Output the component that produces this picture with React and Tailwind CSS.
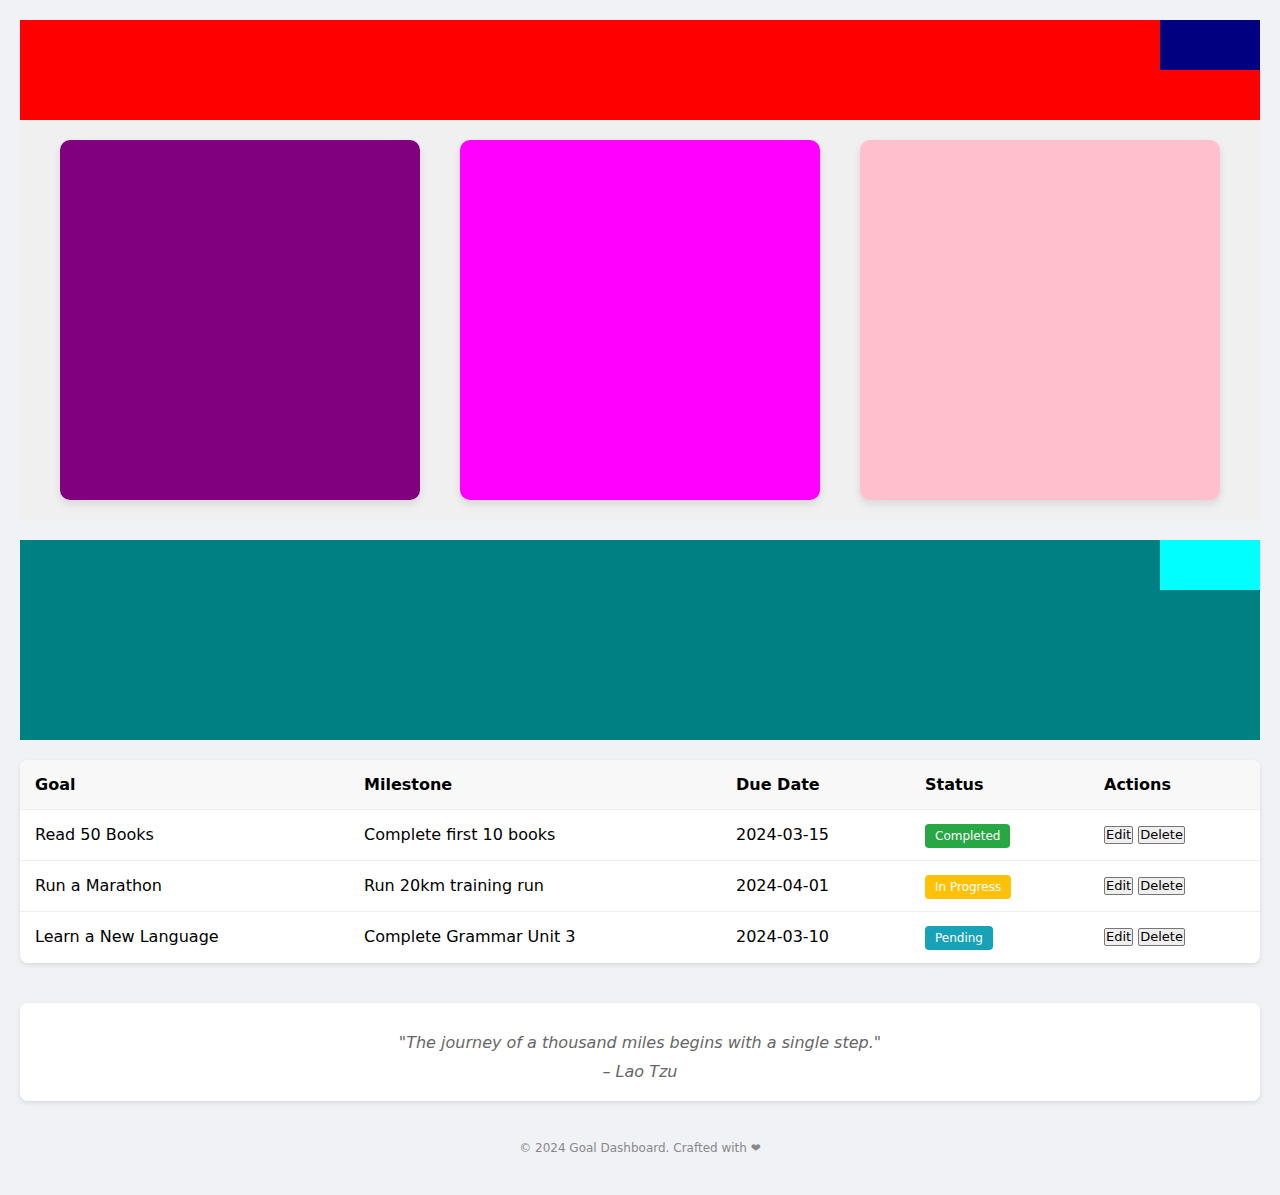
import React from 'react';

const goals = [
  { goal: 'Read 50 Books', milestone: 'Complete first 10 books', due: '2024-03-15', status: 'Completed' },
  { goal: 'Run a Marathon', milestone: 'Run 20km training run', due: '2024-04-01', status: 'In Progress' },
  { goal: 'Learn a New Language', milestone: 'Complete Grammar Unit 3', due: '2024-03-10', status: 'Pending' },
];

const badgeClass = {
  Completed: 'bg-[#28a745]',
  'In Progress': 'bg-[#ffc107]',
  Pending: 'bg-[#17a2b8]',
};

const StatusBadge = ({ status }) => (
  <span className={`${badgeClass[status]} text-white text-[12px] leading-[14px] px-[10px] py-[5px] rounded-[4px]`}>
    {status}
  </span>
);

const SmallButton = ({ children }) => (
  <button className="text-[13px] leading-[16px] px-[1px] border border-[#767676] bg-[#efefef] rounded-[2px] text-black">
    {children}
  </button>
);

const App = () => {
  return (
    <div className="min-h-[1195px] bg-[#f0f2f5] p-[20px] text-black" style={{ fontFamily: '"DejaVu Sans", sans-serif' }}>
      {/* header */}
      <div className="h-[100px] bg-[#ff0000] flex justify-end">
        <div className="w-[100px] h-[50px] bg-[#000080]"></div>
      </div>

      {/* cards */}
      <div className="bg-[#f0f0f0] px-[40px] py-[20px] grid grid-cols-3 gap-[40px]">
        <div className="h-[360px] rounded-[10px] bg-[#800080] shadow-[0_4px_8px_rgba(0,0,0,0.1)]"></div>
        <div className="h-[360px] rounded-[10px] bg-[#ff00ff] shadow-[0_4px_8px_rgba(0,0,0,0.1)]"></div>
        <div className="h-[360px] rounded-[10px] bg-[#ffc0cb] shadow-[0_4px_8px_rgba(0,0,0,0.1)]"></div>
      </div>

      {/* banner */}
      <div className="mt-[20px] h-[200px] bg-[#008080] flex justify-end">
        <div className="w-[100px] h-[50px] bg-[#00ffff]"></div>
      </div>

      {/* goals table */}
      <div className="mt-[20px] bg-white rounded-[8px] overflow-hidden shadow-[0_2px_5px_rgba(0,0,0,0.1)]">
        <table className="w-full table-fixed border-collapse text-[16px] leading-[19px]">
          <colgroup>
            <col className="w-[329px]" />
            <col className="w-[372px]" />
            <col className="w-[189px]" />
            <col className="w-[179px]" />
            <col className="w-[171px]" />
          </colgroup>
          <thead>
            <tr className="bg-[#f8f8f8]">
              {['Goal', 'Milestone', 'Due Date', 'Status', 'Actions'].map((h) => (
                <th key={h} className="text-left font-bold px-[15px] py-[15px] border-b border-[#eeeeee]">
                  {h}
                </th>
              ))}
            </tr>
          </thead>
          <tbody>
            {goals.map((g, i) => {
              const cell = `px-[15px] py-[15px] leading-[20px] border-b ${i < goals.length - 1 ? 'border-[#eeeeee]' : 'border-white'}`;
              return (
                <tr key={g.goal}>
                  <td className={cell}>{g.goal}</td>
                  <td className={cell}>{g.milestone}</td>
                  <td className={cell}>{g.due}</td>
                  <td className={cell}>
                    <StatusBadge status={g.status} />
                  </td>
                  <td className={cell}>
                    <div className="flex items-center gap-[5px]">
                      <SmallButton>Edit</SmallButton>
                      <SmallButton>Delete</SmallButton>
                    </div>
                  </td>
                </tr>
              );
            })}
          </tbody>
        </table>
      </div>

      {/* quote */}
      <div className="mt-[40px] bg-white rounded-[8px] shadow-[0_2px_5px_rgba(0,0,0,0.1)] pt-[25px] pb-[15px] text-center italic text-[#666666] text-[16px] leading-[29px]">
        <p>"The journey of a thousand miles begins with a single step."</p>
        <p>– Lao Tzu</p>
      </div>

      {/* footer */}
      <footer className="mt-[20px] py-[20px] text-center text-[12px] leading-[14px] text-[#888888]">
        © 2024 Goal Dashboard. Crafted with ❤
      </footer>
    </div>
  );
};

export default App;
